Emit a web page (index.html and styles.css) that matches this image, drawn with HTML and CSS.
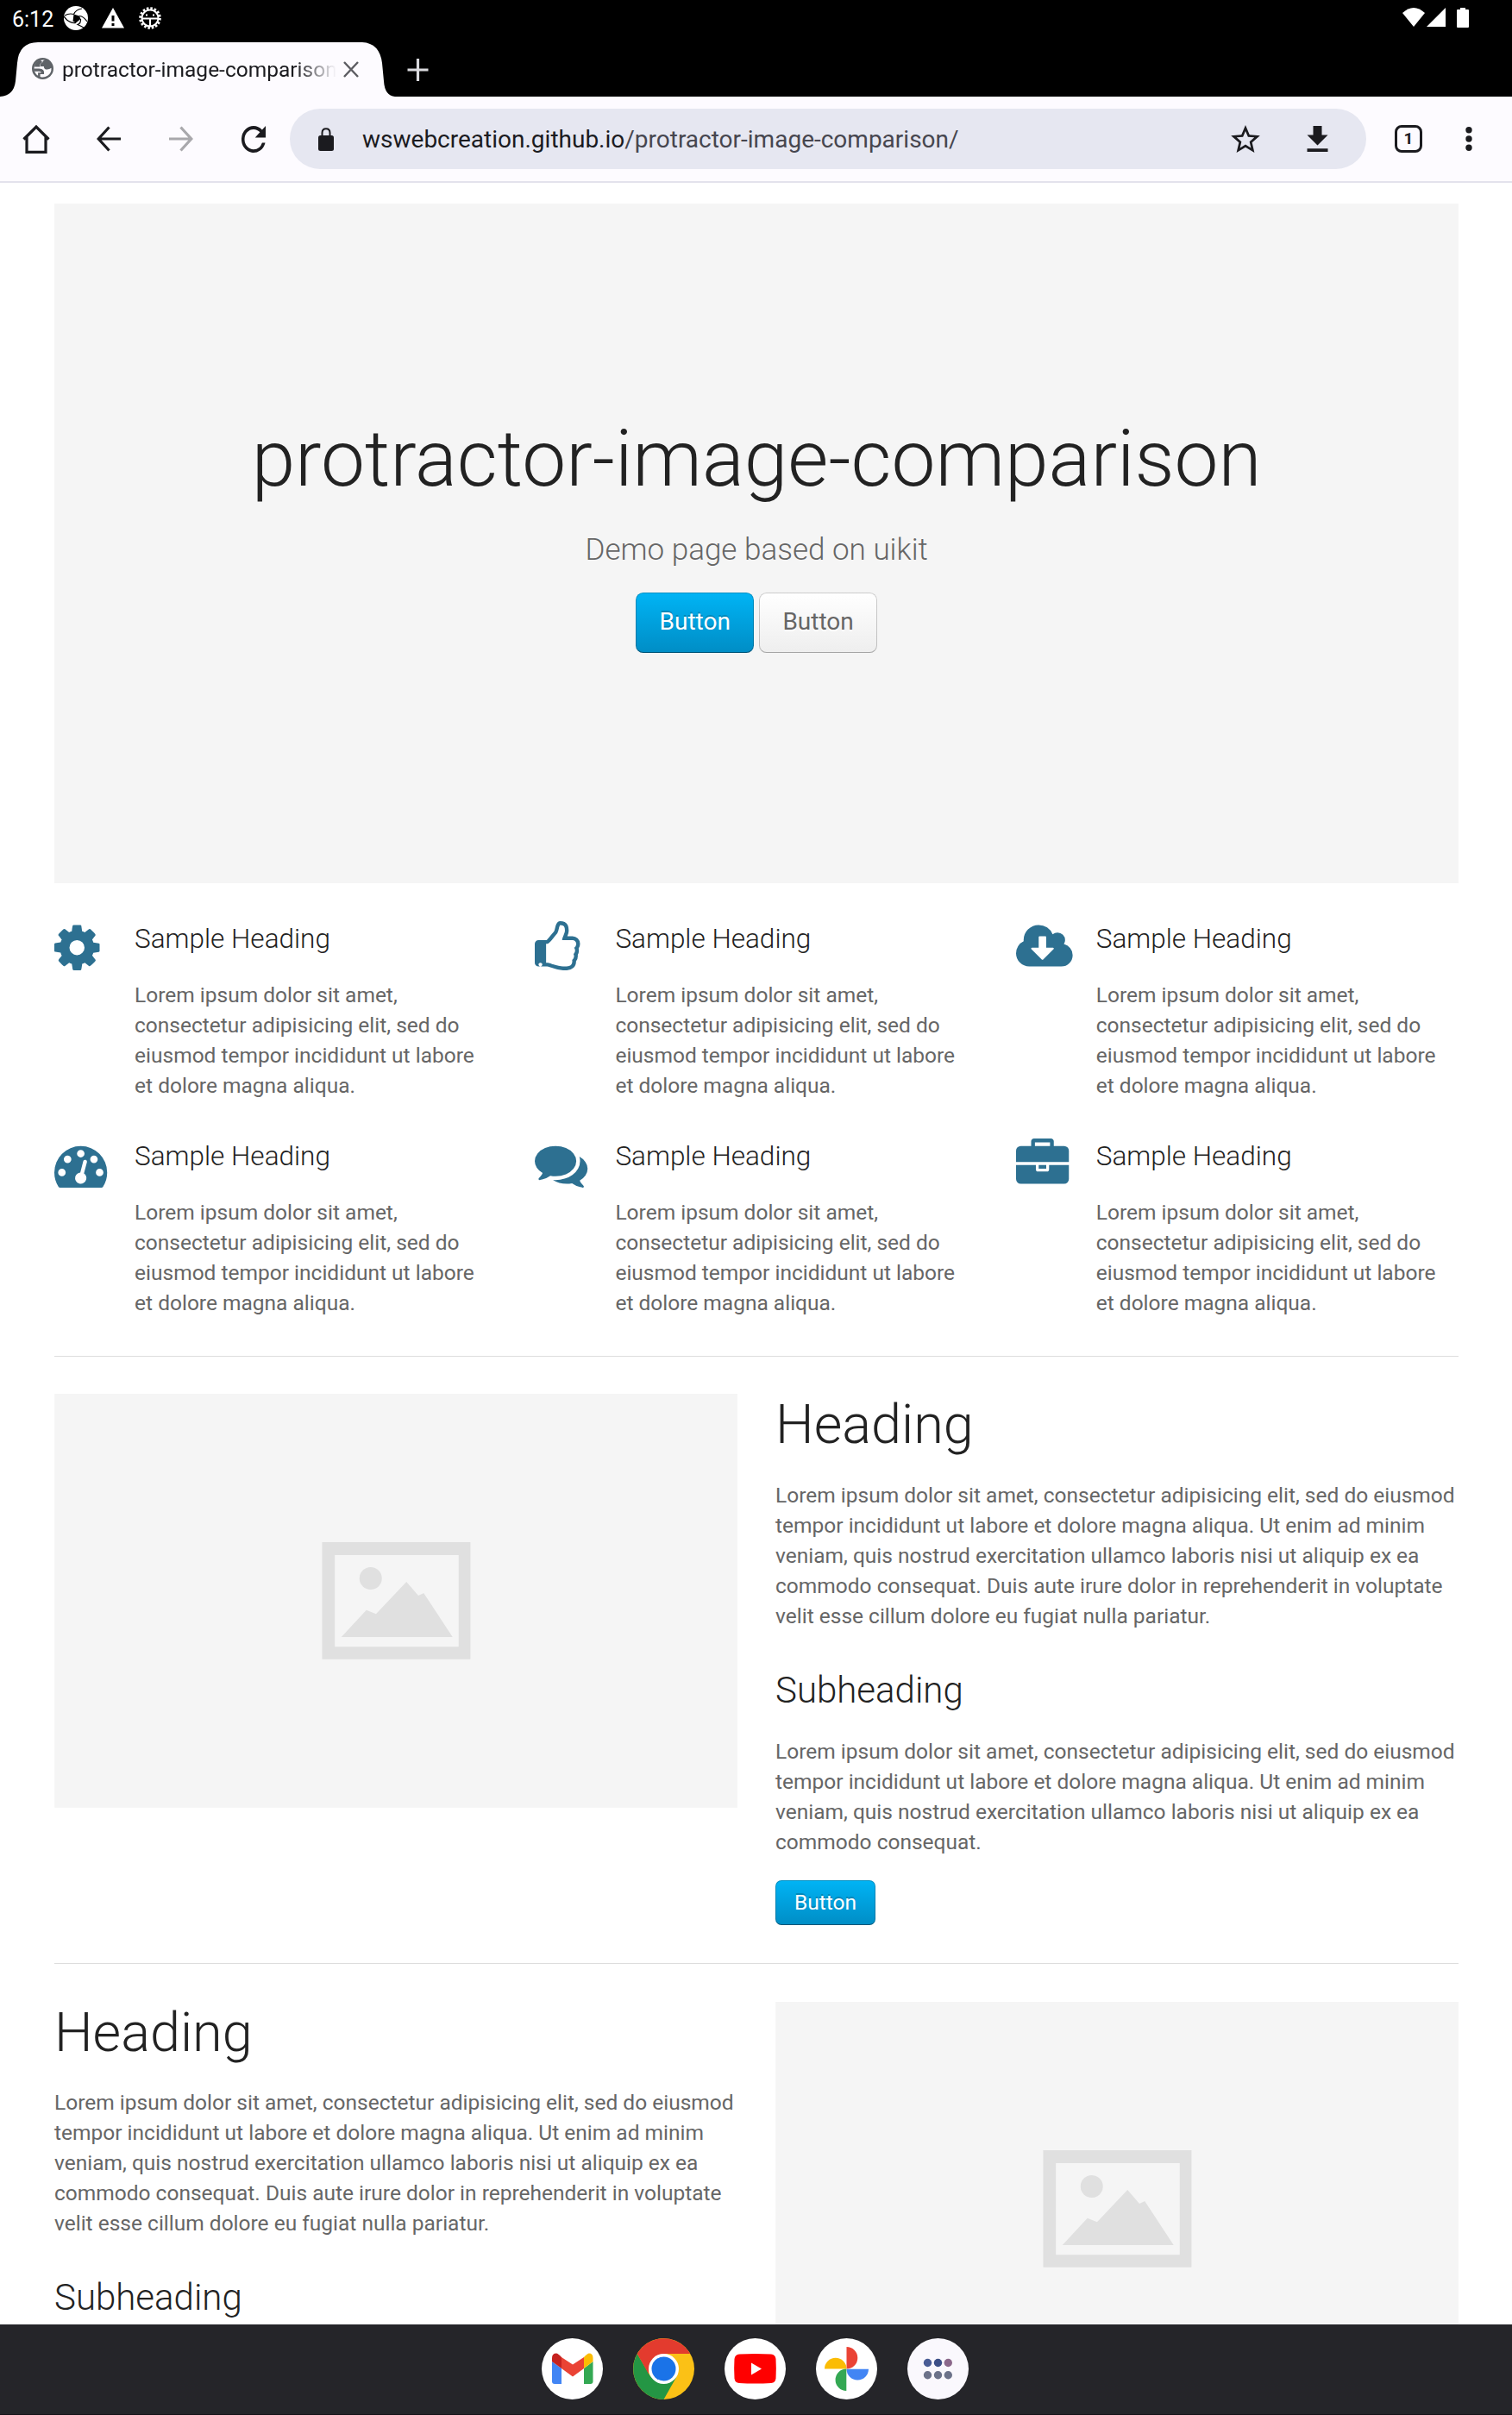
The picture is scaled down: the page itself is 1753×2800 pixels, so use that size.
FILE: index.html
```html
<!DOCTYPE html>
<html lang="en">
<head>
<meta charset="utf-8">
<title>protractor-image-comparison</title>
<link rel="stylesheet" href="styles.css">
</head>
<body>
<svg class="defs" width="0" height="0" aria-hidden="true">
  <symbol id="placeholder" viewBox="0 0 792 480">
    <rect width="792" height="480" fill="#f5f5f5"/>
    <path fill="#e0e0e0" fill-rule="evenodd" d="M310.3 172H482.3V307.7H310.3ZM325 187V293.3H468.6V187Z"/>
    <circle cx="366.6" cy="214" r="13" fill="#e0e0e0"/>
    <path fill="#e0e0e0" d="M332.6 282L361.6 250.7L372.8 255.3L408.1 218L421.9 234L428.1 231L461.6 282Z"/>
  </symbol>
</svg>
<div class="screen">
  <header class="status">
    <div class="status-left">
      <span class="clock">6:12</span>
      <svg class="s-app" viewBox="0 0 28 28"><circle cx="14" cy="14" r="14" fill="#fff"/><path fill="#000" d="M11.500 9.500L18 11.500L19.500 15L14 19.500L10.500 17.500Z"/><path d="M11.500 9.500Q14 4 21 3M11.500 9.500Q6 8 1 11M18 11.500Q23 12 27 18M19.500 15Q20 20 16 21.500Q20 23 26 27M14 19.500Q8 20 3.500 16L0 12" fill="none" stroke="#000" stroke-width="1.200"/></svg>
      <svg class="s-warn" viewBox="0 0 26 24" preserveAspectRatio="none"><path fill="#fff" fill-rule="evenodd" d="M13 0L26 23.500H0ZM11.500 9V15.500H14.500V9ZM11.500 18V21H14.500V18Z"/></svg>
      <svg class="s-bug" viewBox="0 0 26 26"><g fill="none" stroke="#fff"><circle cx="13" cy="13" r="11.300" stroke-width="3" stroke-dasharray="2.500 1.937"/><circle cx="13" cy="13" r="9.500" stroke-width="2"/><path stroke-width="2" d="M3.500 13.500H22.500M13 13.500V22.500"/></g><path fill="#fff" d="M8 8.500h2v2H8zM16 8.500h2v2h-2z"/></svg>
    </div>
    <div class="status-right">
      <svg class="s-wifi" viewBox="0 0 26 22"><path fill="#fff" d="M0 6Q13-6 26 6L13 22Z"/></svg>
      <svg class="s-cell" viewBox="0 0 22 22"><path fill="#fff" d="M22 0V22H0Z"/></svg>
      <svg class="s-batt" viewBox="0 0 14 23"><path fill="#fff" d="M4 0H10V2H13Q14 2 14 3V22Q14 23 13 23H1Q0 23 0 22V3Q0 2 1 2H4Z"/></svg>
    </div>
  </header>
  <div class="tabs">
    <div class="tab">
      <svg class="tab-shape" viewBox="0 0 458 63"><path fill="#fdfbff" d="M0 63Q16 62 18 45L20 24Q22 0 44 0H420Q440 1 443 24L445 45Q446 62 458 63Z"/></svg>
      <svg class="globe" viewBox="0 0 24 24"><circle cx="12" cy="12" r="12" fill="#5f6368"/><path fill="#fdfbff" d="M14.500 2.600Q11.800 3 11.800 5.200Q9 5.400 9.500 9.500H13.300Q13.300 13 17 13Q19.500 13 21.600 11.300Q22 17 17.500 20Q13.500 22.600 9.200 21.200V18.300H13.500Q14.500 12 8 12H2.400Q2.400 13.500 2.800 15H8Q10.500 15 10.500 16.500H6.800V20Q2.500 17 2.400 12Q2.600 5 9 2.900Q12 2 14.500 2.600Z"/><path fill="#5f6368" d="M3.500 7Q5.500 3.500 9.500 2.700L12 5Q8.500 5.500 9 10H3Q2.800 8.500 3.500 7Z"/></svg>
      <span class="tab-title">protractor-image-comparison</span>
      <svg class="tab-close" viewBox="0 0 18 19"><path d="M1 1L17 18M17 1L1 18" stroke="#5c5c61" stroke-width="2.400"/></svg>
    </div>
    <svg class="plus" viewBox="0 0 24 26"><path d="M12 0V26M0 13H24" stroke="#dadade" stroke-width="3.200"/></svg>
  </div>
  <nav class="toolbar">
    <svg class="t-home" viewBox="0 0 32 34"><path d="M1.500 17.500L16 3L30.500 17.500M5 15V32.300H27V15" fill="none" stroke="#1b1b1f" stroke-width="3.200"/></svg>
    <svg class="t-back" viewBox="0 0 28 30"><path d="M14.500 1.500L2.200 15L14.500 28.500M2 15H28" fill="none" stroke="#1b1b1f" stroke-width="3.200"/></svg>
    <svg class="t-fwd" viewBox="0 0 28 30"><path d="M13.500 1.500L25.800 15L13.500 28.500M0 15H26" fill="none" stroke="#a9a8ac" stroke-width="3.200"/></svg>
    <svg class="t-reload" viewBox="4 4 16 16" preserveAspectRatio="none"><path fill="#1b1b1f" d="M17.650 6.350A7.958 7.958 0 0 0 12 4a8 8 0 1 0 7.730 10h-2.080A5.990 5.990 0 0 1 12 18a6 6 0 1 1 0-12c1.660 0 3.140.690 4.220 1.780L13 11h7V4l-2.350 2.350z"/></svg>
    <div class="omnibox">
      <svg class="t-lock" viewBox="0 0 18 27"><rect y="9" width="18" height="18" rx="2.500" fill="#1b1b1f"/><path d="M4.500 10V6Q4.500 1.200 9 1.200T13.500 6V10" fill="none" stroke="#1b1b1f" stroke-width="2"/></svg>
      <span class="url">wswebcreation.github.io<span class="path">/protractor-image-comparison/</span></span>
      <svg class="t-star" viewBox="2 2 20 19"><path fill="#1b1b1f" d="M22 9.240l-7.190-.620L12 2 9.190 8.630 2 9.240l5.460 4.730L5.820 21 12 17.270 18.180 21l-1.630-7.030L22 9.240zM12 15.400l-3.760 2.270 1-4.280-3.320-2.880 4.380-.380L12 6.100l1.710 4.040 4.380.380-3.320 2.880 1 4.280L12 15.400z"/></svg>
      <svg class="t-down" viewBox="0 0 24 30"><path fill="#1b1b1f" d="M7 0H17V10.500H24L12 22.500L0 10.500H7ZM0 26.300H24V30H0Z"/></svg>
    </div>
    <div class="count">1</div>
    <svg class="t-more" viewBox="0 0 8 28"><g fill="#1b1b1f"><circle cx="4" cy="3.700" r="3.700"/><circle cx="4" cy="14" r="3.700"/><circle cx="4" cy="24.300" r="3.700"/></g></svg>
  </nav>
  <main class="page">
    <section class="hero">
      <h1 class="hero-title">protractor-image-comparison</h1>
      <p class="hero-sub">Demo page based on uikit</p>
      <div class="hero-buttons"><a class="btn btn-primary btn-large">Button</a><a class="btn btn-large">Button</a></div>
    </section>
    <section class="features">
      <article class="feature">
        <svg class="icon" viewBox="0 -1536 1792 1792"><path transform="scale(1 -1)" d="M1024 640q0 106-75 181t-181 75-181-75-75-181 75-181 181-75 181 75 75 181zM1536 749v-222q0-12-8-23t-20-13l-185-28q-19-54-39-91 35-50 107-138 10-12 10-25t-9-23q-27-37-99-108t-94-71q-12 0-26 9l-138 108q-44-23-91-38-16-136-29-186-7-28-36-28h-222q-14 0-24.500 8.500t-11.500 21.500l-28 184q-49 16-90 37l-141-107q-10-9-25-9-14 0-25 11-126 114-165 168-7 10-7 23 0 12 8 23 15 21 51 66.500t54 70.500q-27 50-41 99l-183 27q-13 2-21 12.500t-8 23.500v222q0 12 8 23t19 13l186 28q14 46 39 92-40 57-107 138-10 12-10 24 0 10 9 23 26 36 98.500 107.500t94.500 71.500q13 0 26-10l138-107q44 23 91 38 16 136 29 186 7 28 36 28h222q14 0 24.500-8.500t11.500-21.500l28-184q49-16 90-37l142 107q9 9 24 9 13 0 25-10 129-119 165-170 7-8 7-22 0-12-8-23-15-21-51-66.500t-54-70.500q26-50 41-98l183-28q13-2 21-12.500t8-23.500z"/></svg>
        <div><h3>Sample Heading</h3><p>Lorem ipsum dolor sit amet, consectetur adipisicing elit, sed do eiusmod tempor incididunt ut labore et dolore magna aliqua.</p></div>
      </article>
      <article class="feature">
        <svg class="icon" viewBox="0 -1536 1792 1792"><path transform="scale(1 -1)" d="M256 64q0 26-19 45t-45 19-45-19-19-45 19-45 45-19 45 19 19 45zM1408 768q0 51-39 89.500t-89 38.500h-352q0 58 48 159.500t48 160.500q0 98-32 145t-128 47q-26-26-38-85t-30.500-125.500-59.500-109.500q-22-23-77-91-4-5-23-30t-31.500-41-34.500-42.500-40-44-38.500-35.500-40-27-35.500-9h-32v-640h32q13 0 31.500-3t33-6.500 38-11 35-11.500 35.500-12.500 29-10.500q211-73 342-73h121q192 0 192 167 0 26-5 56 30 16 47.500 52.500t17.500 73.500-18 69q53 50 53 119 0 25-10 55.500t-25 47.500q32 1 53.500 47t21.500 81zM1536 769q0-89-49-163 9-33 9-69 0-77-38-144 3-21 3-43 0-101-60-178 1-139-85-219.500t-227-80.500h-129q-96 0-189.500 22.500t-216.500 65.500q-116 40-138 40h-288q-53 0-90.500 37.500t-37.500 90.500v640q0 53 37.500 90.500t90.500 37.500h274q36 24 137 155 58 75 107 128 24 25 35.500 85.500t30.500 126.500 62 108q39 37 90 37 84 0 151-32.500t102-101.500 35-186q0-93-48-192h176q104 0 180-76t76-179z"/></svg>
        <div><h3>Sample Heading</h3><p>Lorem ipsum dolor sit amet, consectetur adipisicing elit, sed do eiusmod tempor incididunt ut labore et dolore magna aliqua.</p></div>
      </article>
      <article class="feature">
        <svg class="icon" viewBox="0 -1536 1792 1792"><path transform="scale(1 -1)" d="M1280 608q0 14-9 23t-23 9h-224v352q0 13-9.500 22.500t-22.500 9.500h-192q-13 0-22.500-9.500t-9.500-22.500v-352h-224q-13 0-22.500-9.500t-9.500-22.500q0-14 9-23l352-352q9-9 23-9t23 9l351 351q10 12 10 24zM1920 384q0-159-112.500-271.500t-271.500-112.500h-1088q-185 0-316.500 131.500t-131.500 316.500q0 130 70 240t188 165q-2 30-2 43 0 212 150 362t362 150q156 0 285.500-87t188.500-231q71 62 166 62 106 0 181-75t75-181q0-76-41-138 130-31 213.500-135.500t83.500-238.500z"/></svg>
        <div><h3>Sample Heading</h3><p>Lorem ipsum dolor sit amet, consectetur adipisicing elit, sed do eiusmod tempor incididunt ut labore et dolore magna aliqua.</p></div>
      </article>
      <article class="feature">
        <svg class="icon" viewBox="0 -1536 1792 1792"><path transform="scale(1 -1)" d="M384 384q0 53-37.500 90.500t-90.500 37.500-90.500-37.500-37.500-90.500 37.500-90.500 90.500-37.500 90.500 37.500 37.500 90.500zM576 832q0 53-37.500 90.500t-90.500 37.500-90.500-37.500-37.500-90.500 37.500-90.500 90.500-37.500 90.500 37.500 37.500 90.500zM1004 351l101 382q6 26-7.500 48.500t-38.500 29.500-48-6.500-30-39.500l-101-382q-60-5-107-43.500t-63-98.500q-20-77 20-146t117-89 146 20 89 117q16 60-6 117t-72 91zM1664 384q0 53-37.500 90.500t-90.500 37.500-90.500-37.500-37.500-90.500 37.500-90.500 90.500-37.500 90.500 37.500 37.500 90.500zM1024 1024q0 53-37.500 90.500t-90.500 37.500-90.500-37.500-37.500-90.500 37.500-90.500 90.500-37.500 90.500 37.500 37.500 90.500zM1472 832q0 53-37.500 90.500t-90.500 37.500-90.500-37.500-37.500-90.500 37.500-90.500 90.500-37.500 90.500 37.500 37.500 90.500zM1792 384q0-261-141-483-19-29-54-29h-1402q-35 0-54 29-141 221-141 483 0 182 71 348t191 286 286 191 348 71 348-71 286-191 191-286 71-348z"/></svg>
        <div><h3>Sample Heading</h3><p>Lorem ipsum dolor sit amet, consectetur adipisicing elit, sed do eiusmod tempor incididunt ut labore et dolore magna aliqua.</p></div>
      </article>
      <article class="feature">
        <svg class="icon" viewBox="0 -1536 1792 1792"><path transform="scale(1 -1)" d="M1408 768q0-139-94-257t-256.500-186.500-353.500-68.500q-86 0-176 16-124-88-278-128-36-9-86-16h-3q-11 0-20.500 8t-11.500 21q-1 3-1 6.500t.5 6.500 2 6l2.500 5t3.500 5.500 4 5 4.500 5 4 4.500q5 6 23 25t26 29.500 22.500 29 25 38.500 20.500 44q-124 72-195 177t-71 224q0 139 94 257t256.500 186.500 353.500 68.500 353.500-68.500 256.500-186.500 94-257zM1792 512q0-120-71-224.500t-195-176.500q10-24 20.500-44t25-38.500 22.500-29 26-29.500 23-25q1-1 4-4.500t4.500-5 4-5 3.500-5.500l2.500-5t2-6 .5-6.500-1-6.500q-3-14-13-22t-22-7q-50 7-86 16-154 40-278 128-90-16-176-16-271 0-472 132 58-4 88-4 161 0 309 45t264 129q125 92 192 212t67 254q0 77-23 152 129-71 204-178t75-230z"/></svg>
        <div><h3>Sample Heading</h3><p>Lorem ipsum dolor sit amet, consectetur adipisicing elit, sed do eiusmod tempor incididunt ut labore et dolore magna aliqua.</p></div>
      </article>
      <article class="feature">
        <svg class="icon" viewBox="0 -1536 1792 1792"><path transform="scale(1 -1)" d="M640 1280h512v128h-512v-128zM1792 640v-480q0-66-47-113t-113-47h-1472q-66 0-113 47t-47 113v480h672v-160q0-26 19-45t45-19h320q26 0 45 19t19 45v160h672zM1024 640v-128h-256v128h256zM1792 1120v-384h-1792v384q0 66 47 113t113 47h352v160q0 40 28 68t68 28h576q40 0 68-28t28-68v-160h352q66 0 113-47t47-113z"/></svg>
        <div><h3>Sample Heading</h3><p>Lorem ipsum dolor sit amet, consectetur adipisicing elit, sed do eiusmod tempor incididunt ut labore et dolore magna aliqua.</p></div>
      </article>
    </section>
    <hr>
    <section class="split">
      <svg class="picture"><use href="#placeholder"/></svg>
      <div class="copy">
        <h1>Heading</h1>
        <p>Lorem ipsum dolor sit amet, consectetur adipisicing elit, sed do eiusmod tempor incididunt ut labore et dolore magna aliqua. Ut enim ad minim veniam, quis nostrud exercitation ullamco laboris nisi ut aliquip ex ea commodo consequat. Duis aute irure dolor in reprehenderit in voluptate velit esse cillum dolore eu fugiat nulla pariatur.</p>
        <h2>Subheading</h2>
        <p>Lorem ipsum dolor sit amet, consectetur adipisicing elit, sed do eiusmod tempor incididunt ut labore et dolore magna aliqua. Ut enim ad minim veniam, quis nostrud exercitation ullamco laboris nisi ut aliquip ex ea commodo consequat.</p>
        <a class="btn btn-primary">Button</a>
      </div>
    </section>
    <hr>
    <section class="split">
      <div class="copy">
        <h1>Heading</h1>
        <p>Lorem ipsum dolor sit amet, consectetur adipisicing elit, sed do eiusmod tempor incididunt ut labore et dolore magna aliqua. Ut enim ad minim veniam, quis nostrud exercitation ullamco laboris nisi ut aliquip ex ea commodo consequat. Duis aute irure dolor in reprehenderit in voluptate velit esse cillum dolore eu fugiat nulla pariatur.</p>
        <h2>Subheading</h2>
      </div>
      <svg class="picture"><use href="#placeholder"/></svg>
    </section>
  </main>
  <footer class="dock">
    <svg viewBox="0 0 71 71"><circle cx="35.500" cy="35.500" r="35.500" fill="#fff"/><path fill="#4285f4" d="M12 27L23 35V53H15Q12 53 12 50Z"/><path fill="#34a853" d="M49 35L59.500 27V50Q59.500 53 56.500 53H49Z"/><path fill="#ea4335" d="M23 22L36 30.500L49 22V35L36 44.500L23 35Z"/><path fill="#c5221f" d="M12 27V23Q12 17.500 17 17.500Q19 17.500 23 22V35Z"/><path fill="#fbbc04" d="M59.500 27V23Q59.500 17.500 55 17.500Q53 17.500 49 22V35Z"/></svg>
    <svg viewBox="0 0 71 71"><circle cx="35.500" cy="35.500" r="35.500" fill="#fbc116"/><path fill="#249644" d="M35.500 71A35.500 35.500 0 0 1 4.800 18L20 44L35.500 53L50.500 44.500Z"/><path fill="#e33b2e" d="M4.800 18A35.500 35.500 0 0 1 66.200 18H35.500L18 36.500V41.500Z"/><circle cx="35.500" cy="35.500" r="17.500" fill="#fff"/><circle cx="35.500" cy="35.500" r="14" fill="#1a73e8"/></svg>
    <svg viewBox="0 0 71 71"><circle cx="35.500" cy="35.500" r="35.500" fill="#fff"/><path fill="red" d="M17 18.500Q35.500 17.500 54 18.500Q59 19 59.500 24Q60.200 35.500 59.500 46.500Q59 51.500 54 52Q35.500 53 17 52Q12 51.500 11.500 46.500Q10.800 35.500 11.500 24Q12 19 17 18.500Z"/><path fill="#fff" d="M31 28.500V42.500L43 35.500Z"/></svg>
    <svg viewBox="0 0 71 71"><circle cx="35.500" cy="35.500" r="35.500" fill="#fff"/><path fill="#ea4335" d="M35.500 10A12.800 12.800 0 0 1 35.500 35.600Z"/><path fill="#fbbc04" d="M10 35.500A12.700 12.700 0 0 1 35.500 35.500Z"/><path fill="#4285f4" d="M35.500 35.700H61A12.700 12.700 0 0 1 35.500 35.700Z"/><path fill="#34a853" d="M35.300 35.500V61A12.700 12.700 0 0 1 35.300 35.500Z"/></svg>
    <svg viewBox="0 0 71 71"><circle cx="35.500" cy="35.500" r="35.500" fill="#faf8fd"/><g fill="#6c7289"><circle cx="23.500" cy="28.500" r="4.700" fill="#495c95"/><circle cx="35.500" cy="28.500" r="4.700" fill="#3c4f87"/><circle cx="47.300" cy="28.500" r="4.700" fill="#8b688b"/><circle cx="23.500" cy="42.700" r="4.700"/><circle cx="35.500" cy="42.700" r="4.700"/><circle cx="47.300" cy="42.700" r="4.700"/></g></svg>
  </footer>
</div>
</body>
</html>
```
FILE: styles.css
```css
* { box-sizing: border-box; }
body { margin: 0; background: #fff; font: 24.5px/35px Roboto, sans-serif; color: #666; }
svg { display: block; flex: none; overflow: visible; }
.defs { position: absolute; }
.screen { display: flex; flex-direction: column; width: 1753px; height: 2800px; overflow: hidden; }

.status { display: flex; justify-content: space-between; height: 49px; flex: none; background: #000; color: #fff; }
.status-left, .status-right { display: flex; align-items: flex-start; }
.clock { width: 60px; margin: 5px 0 0 14px; font-size: 25px; }
.s-app { width: 28px; height: 28px; margin-top: 7px; }
.s-warn { width: 26px; height: 24px; margin: 9px 0 0 16px; }
.s-bug { width: 26px; height: 26px; margin: 8px 0 0 17px; }
.status-right { padding: 9px 50px 0 0; }
.s-wifi { width: 26px; height: 22px; }
.s-cell { width: 22px; height: 22px; margin-left: 2px; }
.s-batt { width: 14px; height: 23px; margin-left: 13px; }

.tabs { display: flex; align-items: center; height: 63px; flex: none; background: #000; }
.tab { position: relative; display: flex; align-items: center; width: 458px; height: 63px; padding-left: 37px; color: #1b1b1f; }
.tab-shape { position: absolute; left: 0; top: 0; width: 458px; height: 63px; }
.globe { position: relative; width: 25px; height: 25px; margin-top: -2px; }
.tab-title { position: relative; width: 318px; margin-left: 10px; white-space: nowrap; font-size: 24.5px; -webkit-mask-image: linear-gradient(90deg, #000 85%, transparent); mask-image: linear-gradient(90deg, #000 85%, transparent); }
.tab-close { position: relative; width: 18px; height: 19px; margin-left: 8px; }
.plus { width: 25px; height: 26px; margin-left: 14px; }

.toolbar { display: flex; align-items: center; height: 100px; flex: none; padding: 0 0 0 26px; background: #fdfbff; border-bottom: 2px solid #e3e2ec; }
.t-home { width: 32px; height: 34px; }
.t-back { width: 28px; height: 30px; margin-left: 54px; }
.t-fwd { width: 28px; height: 30px; margin-left: 56px; }
.t-reload { width: 28px; height: 31px; margin-left: 56px; }
.omnibox { display: flex; align-items: center; width: 1248px; height: 70px; margin-left: 28px; padding-left: 33px; border-radius: 35px; background: #e6e7f1; }
.t-lock { width: 18px; height: 27px; }
.url { width: 1006px; margin-left: 33px; padding-top: 1px; font-size: 28px; color: #1b1b1f; }
.path { color: #46464f; }
.t-star { width: 34px; height: 32px; margin-left: 1px; }
.t-down { width: 25px; height: 30px; margin-left: 54px; }
.count { width: 32px; height: 32px; margin-left: 33px; border: 3.5px solid #1b1b1f; border-radius: 8px; font-size: 19px; font-weight: 700; line-height: 25px; text-align: center; color: #1b1b1f; }
.t-more { width: 8px; height: 28px; margin-left: 50px; }

.page { flex: 1; min-height: 0; overflow: hidden; padding: 24px 61.7px 0 63px; }
h1, h2, h3, p { margin: 0; }
h1, h2, h3 { font-weight: 300; color: #222; }
.hero { display: flex; flex-direction: column; align-items: center; justify-content: center; height: 787.5px; background: #f5f5f5; }
.hero-title { margin: -1px 0 27.25px; font-size: 91px; line-height: 112px; }
.hero-sub { margin-bottom: 26.25px; font-size: 35px; font-weight: 300; line-height: 45.5px; }
.hero-buttons { display: flex; gap: 6px; margin-bottom: 26.25px; }
.btn { display: inline-block; height: 52.5px; padding: 0 21px; border: 1px solid rgba(0, 0, 0, .2); border-bottom-color: rgba(0, 0, 0, .3); border-radius: 7px; background: #f7f7f7 linear-gradient(#fff, #eee) border-box; color: #666; line-height: 50px; text-shadow: 0 1.75px 0 #fff; }
.btn-large { height: 70px; padding: 0 26.25px; border-radius: 8.75px; font-size: 28px; line-height: 66px; }
.btn-primary { background: #009dd8 linear-gradient(#00b4f5, #008dc5) border-box; border-bottom-color: rgba(0, 0, 0, .4); color: #fff; text-shadow: 0 -1.75px 0 rgba(0, 0, 0, .2); }

.features { display: grid; grid-template-columns: repeat(3, 1fr); gap: 43.75px; margin-top: 43.75px; }
.feature { display: grid; grid-template-columns: 49.3px 1fr; gap: 43.75px; }
.feature h3 { margin-bottom: 26.25px; padding-top: 1px; font-size: 31.5px; line-height: 41px; }
.icon { width: 61.25px; height: 61.25px; margin-top: .5px; fill: #2d7091; }
hr { height: 1px; margin: 44.25px 0 43.25px; border: 0; background: #ddd; }
.split { display: grid; grid-template-columns: 1fr 1fr; gap: 43.75px; align-items: start; }
.picture { width: 100%; height: 479.9px; }
.copy h1 { margin-bottom: 28.25px; font-size: 63px; line-height: 71.5px; }
.copy h2 { margin: 43.75px 0 28.25px; font-size: 42px; line-height: 50.5px; }
.copy p { margin-bottom: 26.25px; }
.copy .btn { display: block; width: fit-content; }

.dock { display: flex; align-items: flex-start; justify-content: center; gap: 35px; height: 105px; flex: none; padding: 16px 1.5px 0 0; background: #252529; border-bottom: 1px solid #151218; }
.dock svg { width: 71px; height: 71px; }
```
